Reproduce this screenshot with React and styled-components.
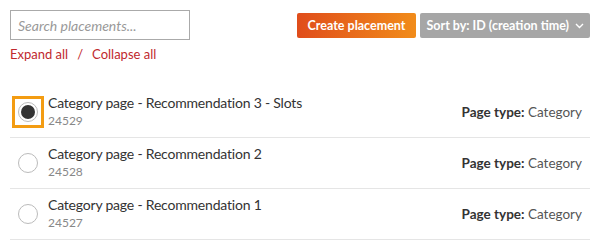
import React from "react"
import styled, { createGlobalStyle } from "styled-components"

const GlobalStyle = createGlobalStyle`
	body {
		margin: 0;
		background: #fff;
		font-family: Lato, "Open Sans", sans-serif;
		color: #333;
	}
`

const Page = styled.div`
	padding: 10px;
	width: 580px;
`

const Header = styled.div`
	display: flex;
	justify-content: space-between;
	align-items: flex-start;
`

const SearchBlock = styled.div`
	display: flex;
	flex-direction: column;
`

const SearchInput = styled.input`
	box-sizing: border-box;
	width: 180px;
	height: 30px;
	border: 1px solid #aaa;
	padding: 0 7px;
	font-family: inherit;
	font-size: 14px;
	outline: 0;

	&::placeholder {
		color: #999;
		font-style: italic;
	}
`

const Links = styled.div`
	display: flex;
	gap: 9px;
	margin-top: 5px;
	font-size: 13px;
	line-height: 18px;
	color: #c0282d;
`

const Link = styled.a`
	color: #c0282d;
	text-decoration: none;
	cursor: pointer;
`

const Actions = styled.div`
	display: flex;
	gap: 4px;
	margin-top: 3px;
`

const Button = styled.button`
	height: 25px;
	border: 0;
	border-radius: 2px;
	padding: 0 ${p => (p.$sort ? "6px" : "11px")};
	font-family: inherit;
	font-size: 12.5px;
	font-weight: 700;
	color: #fff;
	display: inline-flex;
	align-items: center;
	gap: 6px;
	background: ${p => (p.$sort ? "#a6a6a6" : "linear-gradient(to right, #e04d1b, #f18c1a)")};
	cursor: pointer;
`

const List = styled.div`
	margin-top: 24px;
`

const Row = styled.div`
	display: flex;
	align-items: center;
	height: 50px;
	border-bottom: 1px solid #e5e5e5;
`

const RadioBox = styled.div`
	box-sizing: border-box;
	width: 32px;
	height: 32px;
	margin-left: 2px;
	display: flex;
	align-items: center;
	justify-content: center;
	border: 3px solid ${p => (p.$focus ? "#f39c12" : "transparent")};
`

const Radio = styled.span`
	box-sizing: border-box;
	width: 20px;
	height: 20px;
	border-radius: 50%;
	border: 1px solid #bbb;
	display: flex;
	align-items: center;
	justify-content: center;

	&::after {
		content: "";
		width: 14px;
		height: 14px;
		border-radius: 50%;
		background: ${p => (p.$checked ? "#333" : "transparent")};
	}
`

const Info = styled.div`
	flex: 1;
	margin-left: 4px;
	display: flex;
	flex-direction: column;
`

const Title = styled.div`
	font-size: 14px;
	line-height: 18px;
	letter-spacing: -0.2px;
	color: #333;
`

const Id = styled.div`
	font-size: 12px;
	line-height: 18px;
	color: #888;
`

const Meta = styled.div`
	font-size: 13.5px;
	margin-right: 8px;
	color: #555;

	b {
		color: #333;
	}
`

const placements = [
	{ id: 24529, name: "Category page - Recommendation 3 - Slots", checked: true },
	{ id: 24528, name: "Category page - Recommendation 2" },
	{ id: 24527, name: "Category page - Recommendation 1" },
]

const App = () => (
	<Page>
		<GlobalStyle />
		<Header>
			<SearchBlock>
				<SearchInput placeholder="Search placements..." />
				<Links>
					<Link>Expand all</Link>
					<span>/</span>
					<Link>Collapse all</Link>
				</Links>
			</SearchBlock>
			<Actions>
				<Button>Create placement</Button>
				<Button $sort>
					Sort by: ID (creation time)
					<svg width="9" height="6" viewBox="0 0 9 6">
						<path d="M1 1l3.5 3.5L8 1" stroke="#fff" strokeWidth="1.4" fill="none" />
					</svg>
				</Button>
			</Actions>
		</Header>
		<List>
			{placements.map(item => (
				<Row key={item.id}>
					<RadioBox $focus={item.checked}>
						<Radio $checked={item.checked} />
					</RadioBox>
					<Info>
						<Title>{item.name}</Title>
						<Id>{item.id}</Id>
					</Info>
					<Meta><b>Page type:</b> Category</Meta>
				</Row>
			))}
		</List>
	</Page>
)

export default App
